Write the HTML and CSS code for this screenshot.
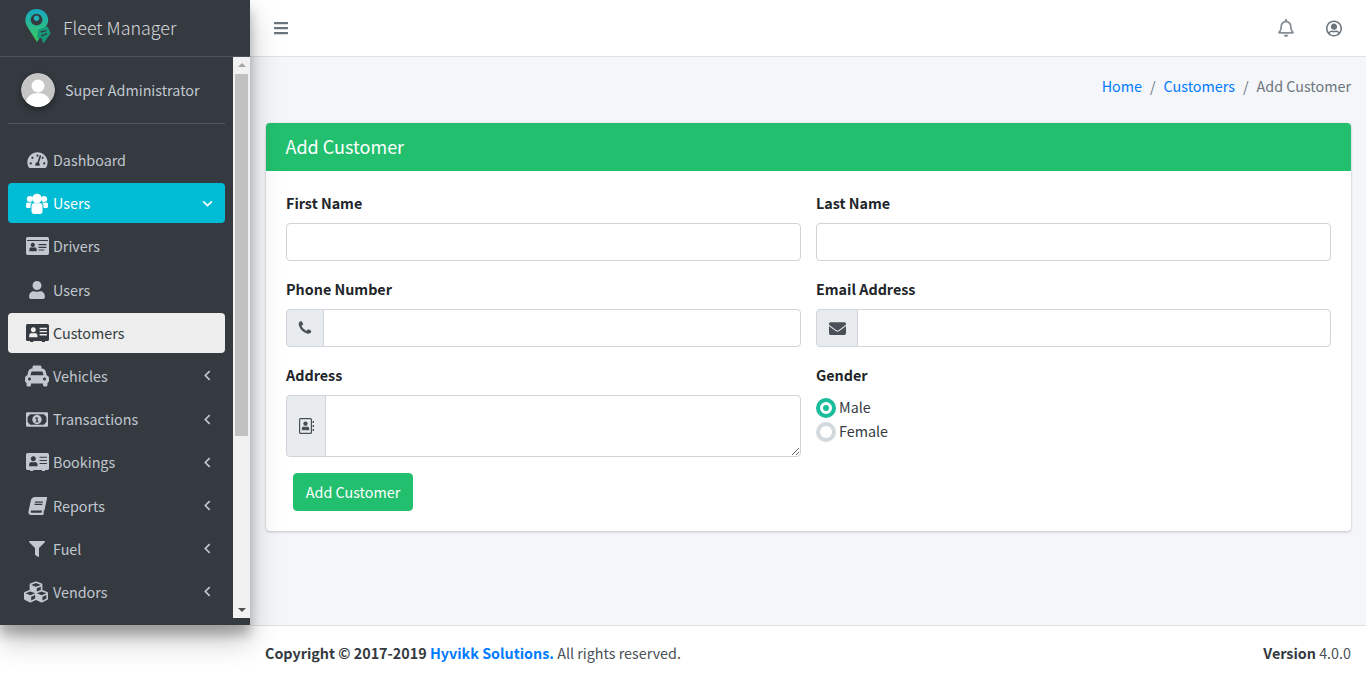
FILE: index.html
```html
<!DOCTYPE html>
<html lang="en">
<head>
<meta charset="utf-8">
<title>Fleet Manager - Add Customer</title>
<link rel="stylesheet" href="styles.css">
</head>
<body>
<aside class="sidebar">
  <div class="brand">
    <svg class="logo" viewBox="0 0 26 36">
      <defs><linearGradient id="lg" x1="0" y1="0" x2="0" y2="1"><stop offset="0" stop-color="#17a8c4"/><stop offset="1" stop-color="#3ccb5a"/></linearGradient></defs>
      <path fill="url(#lg)" d="M11.500 0C5 0 0 5 0 11.500c0 3 1.500 6 3.500 9L12 34l3-5 1-7 4-2.500c2-2.500 3.500-5 3.500-8C23.500 5 18 0 11.500 0z"/>
      <circle cx="11.500" cy="11" r="6" fill="#343a40"/>
      <circle cx="11.500" cy="9.500" r="2.800" fill="#1fb0b8"/>
      <path fill="#159a7c" d="M13 21l10-3 3 7-7.500 10.500-2-6-4.500 1z"/>
      <path fill="#343a40" d="M15.500 23l6-1.500.6 1.200-6 1.700zM16 27l6-2.300.6 1.200-6 2.300z"/>
    </svg>
    <span class="brand-text">Fleet Manager</span>
  </div>
  <div class="side-scroll">
    <div class="side-content">
      <div class="user-panel">
        <svg class="avatar" viewBox="0 0 34 34"><circle cx="17" cy="17" r="17" fill="#c6c6c6"/><circle cx="17" cy="13" r="6.500" fill="#fff"/><path fill="#fff" d="M5 29c1-6 6-9 12-9s11 3 12 9c-3 3-7 5-12 5S8 32 5 29z"/></svg>
        <span class="user-name">Super Administrator</span>
      </div>
      <nav class="nav">
        <a class="item"><span class="ic"><svg class="i22" viewBox="0 0 576 512"><path d="M288 32C128.940 32 0 160.940 0 320c0 52.800 14.250 102.260 39.060 144.800 5.610 9.620 16.300 15.200 27.440 15.200h443c11.140 0 21.830-5.580 27.440-15.200C561.750 422.260 576 372.800 576 320c0-159.060-128.940-288-288-288zm0 64c14.710 0 26.580 10.130 30.320 23.650-1.110 2.260-2.640 4.230-3.450 6.670l-9.220 27.670c-5.130 3.490-10.970 6.010-17.640 6.010-17.670 0-32-14.330-32-32S270.330 96 288 96zM96 384c-17.670 0-32-14.330-32-32s14.330-32 32-32 32 14.330 32 32-14.330 32-32 32zm48-160c-17.670 0-32-14.330-32-32s14.330-32 32-32 32 14.330 32 32-14.330 32-32 32zm246.770-72.410l-61.330 184C343.130 347.330 352 364.540 352 384c0 11.720-3.380 22.550-8.880 32H232.880c-5.500-9.450-8.880-20.280-8.880-32 0-33.940 26.500-61.430 59.900-63.590l61.340-184.010c4.170-12.560 17.730-19.450 30.360-15.170 12.570 4.190 19.350 17.790 15.170 30.360zm14.660 57.200l15.520-46.550c3.470-1.290 7.130-2.230 11.050-2.230 17.670 0 32 14.330 32 32s-14.330 32-32 32c-11.380-.01-20.890-6.280-26.570-15.220zM480 384c-17.670 0-32-14.330-32-32s14.330-32 32-32 32 14.330 32 32-14.330 32-32 32z"/></svg></span>Dashboard</a>
        <a class="item active"><span class="ic"><svg class="iusers" viewBox="0 0 22 21"><circle cx="11" cy="5.500" r="4.800"/><circle cx="3.800" cy="6" r="3"/><circle cx="18.200" cy="6" r="3"/><path d="M5.500 13c0-2 1.500-3 3-3 .8.500 4.200.5 5 0 1.500 0 3 1 3 3v5.500c0 1.500-1 2.500-2.500 2.500H8c-1.500 0-2.500-1-2.500-2.500z"/><path d="M0 11.500C0 10 1 9.500 2 9.500c.6.300 2.400.3 3 0 .3 0 .6.100.8.200-.8.800-1.300 2-1.300 3.300v2H1.500C.6 15 0 14.400 0 13.500zM22 11.500c0-1.500-1-2-2-2-.6.300-2.400.3-3 0-.3 0-.6.100-.8.200.8.800 1.300 2 1.300 3.300v2h3c.9 0 1.500-.6 1.500-1.500z"/></svg></span>Users<svg class="chev" viewBox="0 0 10 10"><path d="M1 3l4 4 4-4"/></svg></a>
        <a class="item"><span class="ic"><svg class="i22" viewBox="0 0 22 17"><path fill-rule="evenodd" d="M1.500 0h19A1.500 1.500 0 0 1 22 1.500v14a1.500 1.500 0 0 1-1.500 1.500h-19A1.500 1.500 0 0 1 0 15.500v-14A1.500 1.500 0 0 1 1.500 0zM1 2.800v.9h20v-.9zM6.500 5.500a2 2 0 1 0 .01 0zM3.200 13.500h7v-1.600c0-1.400-1.100-2.200-1.900-2.200-.6.300-2.600.3-3.200 0-.8 0-1.900.8-1.900 2.200zM12 6.500v1.200h7.500V6.500zM12 9.200v1.200h7.500V9.200zM12 11.800v1h5.500v-1z"/></svg></span>Drivers</a>
        <a class="item"><span class="ic"><svg class="i16" viewBox="0 0 448 512"><path d="M224 256c70.700 0 128-57.300 128-128S294.700 0 224 0 96 57.300 96 128s57.300 128 128 128zm89.600 32h-16.700c-22.200 10.200-46.900 16-72.900 16s-50.600-5.800-72.900-16h-16.700C60.200 288 0 348.200 0 422.400V464c0 26.500 21.500 48 48 48h352c26.500 0 48-21.500 48-48v-41.600c0-74.200-60.200-134.400-134.400-134.400z"/></svg></span>Users</a>
        <a class="item current"><span class="ic"><svg class="i22" viewBox="0 0 22 17"><path fill-rule="evenodd" d="M1.500 0h19A1.500 1.500 0 0 1 22 1.500v13.200a1.500 1.500 0 0 1-1.500 1.500h-2.300v.8h-3v-.8H7v.8H4v-.8H1.500A1.500 1.500 0 0 1 0 14.700V1.500A1.500 1.500 0 0 1 1.500 0zM7 3a2.400 2.400 0 1 1-.01 0zM3 12.500v-1.400c0-1.600 1.300-2.600 2.200-2.600.5.300 3 .3 3.600 0 .9 0 2.200 1 2.200 2.600v1.400zM13 3.500h7v1.300h-7zM13 6.500h7v1.300h-7zM13 9.500h7v1.300h-7z"/></svg></span>Customers</a>
        <a class="item"><span class="ic"><svg class="i24" viewBox="0 0 512 512"><path d="M462 241.640l-22-84.840c-9.600-35.200-41.600-60.800-76.800-60.800H352V64c0-17.670-14.330-32-32-32H192c-17.670 0-32 14.330-32 32v32h-11.200c-35.200 0-67.200 25.600-76.800 60.800l-22 84.840C21.410 248.040 0 273.470 0 304v48c0 23.630 12.950 44.040 32 55.120V448c0 17.670 14.330 32 32 32h32c17.670 0 32-14.330 32-32v-32h256v32c0 17.670 14.330 32 32 32h32c17.670 0 32-14.330 32-32v-40.880c19.050-11.090 32-31.500 32-55.120v-48c0-30.530-21.410-55.960-50-62.360zM96 352c-17.670 0-32-14.330-32-32s14.330-32 32-32 32 14.330 32 32-14.330 32-32 32zm20.550-112l17.200-66.360c2.230-8.160 9.590-13.640 15.060-13.640h214.400c5.470 0 12.830 5.480 15.060 13.640L395.450 240h-278.900zM416 352c-17.670 0-32-14.330-32-32s14.330-32 32-32 32 14.330 32 32-14.330 32-32 32z"/></svg></span>Vehicles<svg class="chev" viewBox="0 0 10 10"><path d="M7 1L3 5l4 4"/></svg></a>
        <a class="item"><span class="ic"><svg class="i21" viewBox="0 0 21 14"><path fill-rule="evenodd" d="M1 0h19a1 1 0 0 1 1 1v12a1 1 0 0 1-1 1H1a1 1 0 0 1-1-1V1a1 1 0 0 1 1-1zM4 2L1.500 4.500v5L4 12h13l2.500-2.500v-5L17 2zM10.500 2.500a4.500 4.500 0 1 1-.01 0zM10 4.800L8.800 5.600v.9l1-.4v2.700H8.800v.9h3.400v-.9h-1V4.800z"/></svg></span>Transactions<svg class="chev" viewBox="0 0 10 10"><path d="M7 1L3 5l4 4"/></svg></a>
        <a class="item"><span class="ic"><svg class="i22" viewBox="0 0 22 17"><path fill-rule="evenodd" d="M1.500 0h19A1.500 1.500 0 0 1 22 1.500v13.200a1.500 1.500 0 0 1-1.500 1.500h-2.300v.8h-3v-.8H7v.8H4v-.8H1.500A1.500 1.500 0 0 1 0 14.700V1.500A1.500 1.500 0 0 1 1.500 0zM7 3a2.400 2.400 0 1 1-.01 0zM3 12.500v-1.400c0-1.600 1.300-2.600 2.200-2.600.5.300 3 .3 3.600 0 .9 0 2.200 1 2.200 2.600v1.400zM13 3.500h7v1h-7zM13 6.500h7v1h-7zM13 9.500h7v1h-7z"/></svg></span>Bookings<svg class="chev" viewBox="0 0 10 10"><path d="M7 1L3 5l4 4"/></svg></a>
        <a class="item"><span class="ic"><svg class="i18 slant" viewBox="0 0 448 512"><path d="M448 360V24c0-13.300-10.700-24-24-24H96C43 0 0 43 0 96v320c0 53 43 96 96 96h328c13.300 0 24-10.700 24-24v-16c0-7.500-3.500-14.300-8.900-18.700-4.200-15.400-4.200-59.300 0-74.700 5.400-4.300 8.900-11.100 8.900-18.600zM128 134c0-3.300 2.700-6 6-6h212c3.300 0 6 2.700 6 6v20c0 3.300-2.700 6-6 6H134c-3.300 0-6-2.700-6-6v-20zm0 64c0-3.300 2.700-6 6-6h212c3.300 0 6 2.700 6 6v20c0 3.300-2.700 6-6 6H134c-3.300 0-6-2.700-6-6v-20zm253.400 250H96c-17.700 0-32-14.300-32-32 0-17.600 14.400-32 32-32h285.400c-1.900 17.100-1.900 46.900 0 64z"/></svg></span>Reports<svg class="chev" viewBox="0 0 10 10"><path d="M7 1L3 5l4 4"/></svg></a>
        <a class="item"><span class="ic"><svg class="i16" viewBox="0 0 512 512"><path d="M487.976 0H24.028C2.710 0-8.047 25.866 7.058 40.971L192 225.941V432c0 7.831 3.821 15.170 10.237 19.662l80 55.980C298.020 518.690 320 507.493 320 487.980V225.941l184.947-184.970C520.021 25.896 509.338 0 487.976 0z"/></svg></span>Fuel<svg class="chev" viewBox="0 0 10 10"><path d="M7 1L3 5l4 4"/></svg></a>
        <a class="item"><span class="ic"><svg class="i24 cubes" viewBox="0 0 512 512"><path d="M488.600 250.200L392 214V105.500c0-15-9.300-28.400-23.400-33.700l-100-37.500c-8.100-3.100-17.100-3.100-25.300 0l-100 37.500c-14.100 5.300-23.400 18.700-23.400 33.700V214l-96.600 36.200C9.300 255.500 0 268.900 0 283.900V394c0 13.600 7.700 26.100 19.900 32.200l100 50c10.100 5.100 22.100 5.100 32.200 0l103.900-52 103.900 52c10.100 5.100 22.100 5.100 32.200 0l100-50c12.200-6.100 19.900-18.600 19.900-32.200V283.900c0-15-9.300-28.400-23.400-33.700zM358 214.800l-85 31.900v-68.200l85-37v73.300zM154 104.100l102-38.200 102 38.200v.6l-102 41.400-102-41.400v-.6zm84 291.100l-85 42.500v-79.100l85-38.800v75.400zm0-112l-102 41.400-102-41.400v-.6l102-38.200 102 38.200v.6zm240 112l-85 42.500v-79.100l85-38.800v75.400zm0-112l-102 41.400-102-41.400v-.6l102-38.200 102 38.200v.6z"/></svg></span>Vendors<svg class="chev" viewBox="0 0 10 10"><path d="M7 1L3 5l4 4"/></svg></a>
      </nav>
    </div>
    <div class="scrollbar">
      <span class="arrow up"></span>
      <span class="thumb"></span>
      <span class="arrow down"></span>
    </div>
  </div>
</aside>
<div class="main">
  <header class="topbar">
    <svg class="bars" viewBox="0 0 448 512"><path d="M16 132h416c8.837 0 16-7.163 16-16V76c0-8.837-7.163-16-16-16H16C7.163 60 0 67.163 0 76v40c0 8.837 7.163 16 16 16zm0 160h416c8.837 0 16-7.163 16-16v-40c0-8.837-7.163-16-16-16H16c-8.837 0-16 7.163-16 16v40c0 8.837 7.163 16 16 16zm0 160h416c8.837 0 16-7.163 16-16v-40c0-8.837-7.163-16-16-16H16c-8.837 0-16 7.163-16 16v40c0 8.837 7.163 16 16 16z"/></svg>
    <div class="top-icons">
      <svg class="bell" viewBox="0 0 448 512"><path d="M439.390 362.290c-19.320-20.760-55.470-51.990-55.470-154.290 0-77.700-54.480-139.900-127.940-155.160V32c0-17.670-14.320-32-31.980-32s-31.980 14.330-31.980 32v20.840C118.560 68.100 64.080 130.300 64.080 208c0 102.300-36.150 133.530-55.470 154.290-6 6.450-8.660 14.160-8.610 21.710.11 16.400 12.980 32 32.100 32h383.800c19.120 0 32-15.600 32.100-32 .05-7.550-2.610-15.270-8.610-21.710zM67.530 368c21.220-27.970 44.420-74.330 44.530-159.420 0-.2-.06-.38-.06-.58 0-61.860 50.140-112 112-112s112 50.140 112 112c0 .2-.06.38-.06.58.11 85.100 23.310 131.460 44.530 159.420H67.530zM224 512c35.320 0 63.970-28.650 63.970-64H160.030c0 35.350 28.650 64 63.970 64z"/></svg>
      <svg class="usercircle" viewBox="0 0 496 512"><path d="M248 8C111 8 0 119 0 256s111 248 248 248 248-111 248-248S385 8 248 8zm0 448c-49.700 0-95.100-18.300-130.100-48.400 14.900-23 40.400-38.600 69.600-39.500 20.800 6.400 40.600 9.600 60.500 9.600s39.700-3.100 60.500-9.600c29.200 1 54.700 16.500 69.600 39.500-35 30.100-80.400 48.400-130.100 48.400zm162.700-84.100c-24.400-31.400-62.100-51.900-105.100-51.900-10.200 0-26 9.600-57.600 9.600-31.500 0-47.400-9.600-57.600-9.600-42.900 0-80.600 20.500-105.100 51.900C61.900 339.200 48 299.200 48 256c0-110.300 89.700-200 200-200s200 89.700 200 200c0 43.200-13.900 83.200-37.300 115.900zM248 104c-53 0-96 43-96 96s43 96 96 96 96-43 96-96-43-96-96-96z"/></svg>
    </div>
  </header>
  <main class="content">
    <ol class="crumbs">
      <li><a>Home</a></li>
      <li class="sep">/</li>
      <li><a>Customers</a></li>
      <li class="sep">/</li>
      <li class="now">Add Customer</li>
    </ol>
    <section class="card">
      <h3 class="card-head">Add Customer</h3>
      <form class="card-body">
        <div class="grid">
          <div class="field">
            <label class="lbl">First Name</label>
            <input class="ctl" type="text">
          </div>
          <div class="field">
            <label class="lbl">Last Name</label>
            <input class="ctl" type="text">
          </div>
          <div class="field">
            <label class="lbl">Phone Number</label>
            <div class="group">
              <span class="addon w38"><svg class="i15" viewBox="0 0 1792 1792"><path d="M1600 1240q0 27-10 70.500t-21 68.500q-21 50-122 106-94 51-186 51-27 0-53-3.500t-57.500-12.500-47-14.500-55.500-20.500-49-18q-98-35-175-83-127-79-264-216t-216-264q-48-77-83-175-3-9-18-49t-20.500-55.500-14.500-47-12.500-57.500-3.500-53q0-92 51-186 56-101 106-122 25-11 68.500-21t70.500-10q14 0 21 3 18 6 53 76 11 19 30 54t35 63.500 31 53.500q3 4 17.500 25t21.500 35.500 7 28.500q0 20-28.500 50t-62 55-62 53-28.500 46q0 9 5 22.500t8.500 20.500 14 24 11.500 19q76 137 174 235t235 174q2 1 19 11.500t24 14 20.500 8.500 22.500 5q18 0 46-28.500t53-62 55-62 50-28.500q14 0 28.500 7t35.500 21.500 25 17.500q25 15 53.500 31t63.500 35 54 30q70 35 76 53 3 7 3 21z"/></svg></span>
              <input class="ctl joined" type="text">
            </div>
          </div>
          <div class="field">
            <label class="lbl">Email Address</label>
            <div class="group">
              <span class="addon w42"><svg class="i17" viewBox="0 0 512 512"><path d="M502.300 190.800c3.900-3.100 9.700-.2 9.700 4.700V400c0 26.500-21.500 48-48 48H48c-26.500 0-48-21.500-48-48V195.600c0-5 5.700-7.800 9.700-4.700 22.400 17.400 52.100 39.500 154.100 113.600 21.100 15.400 56.700 47.800 92.200 47.600 35.700.3 72-32.800 92.300-47.600 102-74.100 131.600-96.300 154-113.700zM256 320c23.200.4 56.600-29.200 73.400-41.400 132.700-96.300 142.800-104.700 173.400-128.700 5.800-4.500 9.200-11.500 9.200-18.900v-19c0-26.500-21.500-48-48-48H48C21.500 64 0 85.500 0 112v19c0 7.400 3.400 14.300 9.200 18.900 30.600 23.900 40.700 32.400 173.400 128.700 16.800 12.200 50.200 41.800 73.400 41.400z"/></svg></span>
              <input class="ctl joined" type="text">
            </div>
          </div>
          <div class="field">
            <label class="lbl">Address</label>
            <div class="group">
              <span class="addon w40"><svg class="i16h" viewBox="0 0 15 16"><path fill-rule="evenodd" d="M1.500 0h10A1.500 1.500 0 0 1 13 1.500v13a1.500 1.500 0 0 1-1.500 1.500h-10A1.500 1.500 0 0 1 0 14.500v-13A1.500 1.500 0 0 1 1.500 0zM1.200 1.600v12.800c0 .2.200.4.400.4h9.800c.2 0 .4-.2.400-.4V1.600c0-.2-.2-.4-.4-.4H1.600c-.2 0-.4.200-.4.400zM6.500 3.500a2.200 2.200 0 1 1-.01 0zM2.800 12.300v-1.500c0-1.300 1-2.200 1.800-2.200.5.300 3.300.3 3.800 0 .8 0 1.800.9 1.800 2.200v1.500zM13.600 3H15v2h-1.400zM13.600 7H15v2h-1.400zM13.600 11H15v2h-1.400z"/></svg></span>
              <textarea class="ctl joined area"></textarea>
            </div>
          </div>
          <div class="field">
            <label class="lbl">Gender</label>
            <div class="radios">
              <div class="radio"><span class="dot on"></span>Male</div>
              <div class="radio"><span class="dot"></span>Female</div>
            </div>
          </div>
        </div>
        <button class="btn" type="button">Add Customer</button>
      </form>
    </section>
  </main>
  <footer class="footer">
    <div><strong>Copyright © 2017-2019 <a class="flink">Hyvikk Solutions.</a></strong> All rights reserved.</div>
    <div><strong>Version</strong> 4.0.0</div>
  </footer>
</div>
</body>
</html>
```

FILE: styles.css
```css
* { box-sizing: border-box; }
html, body { margin: 0; height: 680px; overflow: hidden; }
body {
  display: grid;
  grid-template-columns: 250px 1fr;
  background: #fff;
  font: 400 14.33px/24px "Noto Sans CJK SC", "Noto Sans", sans-serif;
  color: #212529;
}
.sidebar {
  position: relative;
  z-index: 2;
  height: 625px;
  background: #343a40;
  display: flex;
  flex-direction: column;
  box-shadow: 0 14px 28px rgba(0,0,0,.25), 0 10px 10px rgba(0,0,0,.22);
}
.brand {
  height: 57px;
  flex: none;
  display: flex;
  align-items: center;
  padding: 0 0 3px 25px;
  border-bottom: 1px solid #4b545c;
}
.logo { width: 26px; height: 35px; margin-right: 12px; }
.brand-text { font-size: 17.9px; font-weight: 300; color: rgba(255,255,255,.8); line-height: 30px; }
.side-scroll { height: 561px; flex: none; display: flex; }
.side-content { width: 233px; overflow: hidden; }
.user-panel {
  margin: 0 8px 16px;
  padding: 16px 0 16px 13px;
  height: 67px;
  border-bottom: 1px solid #4f5962;
  display: flex;
  align-items: center;
}
.avatar { width: 34px; height: 34px; border-radius: 50%; margin-right: 10px; box-shadow: 0 3px 6px rgba(0,0,0,.35); }
.user-name { color: #c2c7d0; }
.nav { display: flex; flex-direction: column; gap: 3.2px; padding: 0 8px; }
.item {
  height: 40px;
  flex: none;
  display: flex;
  align-items: center;
  padding: 0 12px 0 16px;
  border-radius: 4px;
  color: #c2c7d0;
}
.item svg { fill: currentColor; }
.ic { width: 29px; flex: none; display: flex; justify-content: center; padding-right: 3px; }
.i22 { width: 23px; height: 18px; }
.iusers { width: 22px; height: 21px; }
.i21 { width: 22px; height: 15px; }
.i16 { width: 16px; height: 18px; }
.i18 { width: 17px; height: 18px; }
.i24 { width: 24px; height: 24px; flex: none; }
.cubes { margin-left: -3px; }
.slant { transform: skewX(-12deg); }
.item .chev { margin-left: auto; width: 11px; height: 11px; fill: none; stroke: currentColor; stroke-width: 1.5; }
.item.active { background: #00bcd4; color: #fff; }
.item.current { background: #ecedec; color: #343a40; }
.scrollbar {
  width: 17px;
  background: #f1f1f1;
  display: flex;
  flex-direction: column;
  align-items: center;
}
.arrow { width: 0; height: 0; border-left: 4px solid transparent; border-right: 4px solid transparent; flex: none; }
.arrow.up { border-bottom: 4px solid #a3a3a3; margin-top: 6px; }
.arrow.down { border-top: 4px solid #505050; margin-top: auto; margin-bottom: 6px; }
.thumb { width: 13px; height: 362px; background: #c1c1c1; margin-top: 7px; flex: none; }
.main { display: flex; flex-direction: column; height: 680px; min-width: 0; }
.topbar {
  height: 57px;
  flex: none;
  background: #fff;
  border-bottom: 1px solid #dee2e6;
  display: flex;
  align-items: center;
  justify-content: space-between;
  padding: 0 24px;
}
.bars { width: 14px; height: 16px; fill: #6c757d; }
.top-icons { display: flex; align-items: center; gap: 32px; }
.bell { width: 16px; height: 18px; fill: #868e96; }
.usercircle { width: 16px; height: 17px; fill: #6c757d; }
.content { flex: none; height: 568px; background: #f4f6f9; padding: 17px 15px 0 16px; }
.crumbs {
  list-style: none;
  margin: 0 0 25px;
  padding: 0;
  display: flex;
  justify-content: flex-end;
  gap: 8px;
  height: 24px;
}
.crumbs a { color: #007bff; }
.sep, .now { color: #6c757d; }
.card {
  background: #fff;
  border-radius: 4px;
  box-shadow: 0 0 1px rgba(0,0,0,.125), 0 1px 3px rgba(0,0,0,.2);
}
.card-head {
  margin: 0;
  height: 48px;
  padding: 8px 19.5px;
  background: #22bf6e;
  color: #fff;
  font-size: 18px;
  font-weight: 400;
  line-height: 30px;
  border-radius: 4px 4px 0 0;
}
.card-body { padding: 20px; }
.grid { display: grid; grid-template-columns: 515px 515px; column-gap: 15px; }
.field { margin-bottom: 16px; min-width: 0; }
.lbl { display: block; font-weight: 700; margin-bottom: 8px; }
.ctl {
  display: block;
  width: 100%;
  height: 38px;
  border: 1px solid #ced4da;
  border-radius: 4px;
  background: #fff;
  margin: 0;
  padding: 6px 12px;
  font: inherit;
}
.group { display: flex; }
.addon {
  flex: none;
  display: flex;
  align-items: center;
  justify-content: center;
  background: #e9ecef;
  border: 1px solid #ced4da;
  border-radius: 4px 0 0 4px;
  color: #495057;
}
.addon svg { fill: currentColor; }
.w38 { width: 38px; }
.w42 { width: 42px; }
.w40 { width: 40px; }
.i15 { width: 16px; height: 16px; }
.i17 { width: 17px; height: 17px; }
.i16h { width: 15px; height: 16px; }
.joined { flex: 1; min-width: 0; margin-left: -1px; border-radius: 0 4px 4px 0; }
.area { height: 62px; }
.radios { height: 62px; }
.radio { display: flex; align-items: center; height: 24px; gap: 3px; color: #343a40; }
.dot {
  width: 20px;
  height: 20px;
  margin-top: 2px;
  border-radius: 50%;
  border: 4px solid #d3d9dc;
  background: #fff;
  flex: none;
  display: flex;
  align-items: center;
  justify-content: center;
}
.dot.on { border-color: #1abc9c; }
.dot.on::after { content: ""; width: 6px; height: 6px; border-radius: 50%; background: #1abc9c; }
.btn {
  display: block;
  margin-left: 7px;
  width: 120px;
  height: 38px;
  padding: 0;
  border: 1px solid #22bf6e;
  border-radius: 4px;
  background: #22bf6e;
  color: #fff;
  font: inherit;
}
.footer {
  flex: 1;
  background: #fff;
  border-top: 1px solid #dee2e6;
  display: flex;
  justify-content: space-between;
  padding: 15px 15px 0 15px;
  color: #495057;
}
.footer strong { color: #343a40; font-weight: 700; }
.flink { color: #007bff; }
```
